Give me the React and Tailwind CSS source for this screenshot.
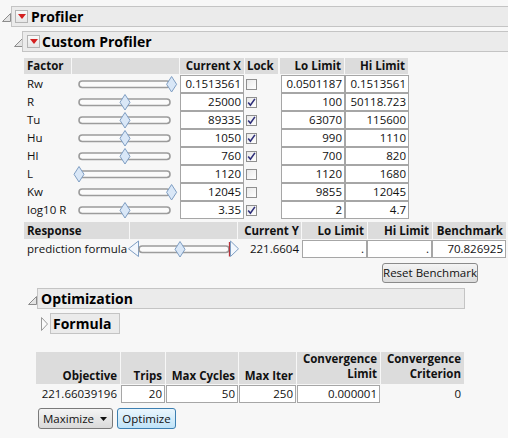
import React from "react";

function OpenTri() {
  return (
    <svg width="9" height="9" viewBox="0 0 9 9" className="block">
      <polygon points="8.5,0.5 8.5,8.5 0.5,8.5" fill="#e4e4e4" stroke="#8c8c8c" strokeWidth="1" />
    </svg>
  );
}

function ClosedTri() {
  return (
    <svg width="7" height="14" viewBox="0 0 7 14" className="block">
      <polygon points="0.5,0.5 6.5,7 0.5,13.5" fill="#fbfbfb" stroke="#9a9a9a" strokeWidth="1" />
    </svg>
  );
}

function RedBtn() {
  return (
    <div className="w-[13px] h-[13px] border border-[#b4b4b4] bg-gradient-to-b from-[#fafafa] to-[#e6e6e6] flex items-center justify-center shrink-0">
      <svg width="8" height="5" viewBox="0 0 8 5" className="block">
        <polygon points="0,0 8,0 4,5" fill="#d42020" />
      </svg>
    </div>
  );
}

function FactorSlider({ c }) {
  return (
    <svg width="107" height="18" viewBox="0 0 107 18" className="block overflow-visible">
      <rect x="7" y="6" width="91" height="6.5" rx="3.2" fill="#fbfbfb" stroke="#9c9c9c" strokeWidth="1.6" />
      <polygon
        points={`${c},1.5 ${c + 5},9.3 ${c},17 ${c - 5},9.3`}
        fill="#d9e7f7"
        stroke="#7f9ec3"
        strokeWidth="1"
      />
    </svg>
  );
}

function ResponseSlider() {
  return (
    <svg width="112" height="18" viewBox="-2 0 112 18" className="block overflow-visible">
      <polygon points="8.5,1 -1.5,8.8 8.5,16.5" fill="#f2f7fd" stroke="#7f9ec3" strokeWidth="1" />
      <rect x="9" y="6" width="90" height="6.5" rx="3.2" fill="#fbfbfb" stroke="#9c9c9c" strokeWidth="1.6" />
      <polygon points="50,1.5 55,9.3 50,17 45,9.3" fill="#d9e7f7" stroke="#7f9ec3" strokeWidth="1" />
      <line x1="99.5" y1="2" x2="99.5" y2="16.5" stroke="#b8323a" strokeWidth="1.3" />
      <polygon points="100.5,1 108.5,8.8 100.5,16.5" fill="#f2f7fd" stroke="#7f9ec3" strokeWidth="1" />
    </svg>
  );
}

function Check({ on }) {
  return (
    <div className="w-[11px] h-[11px] border border-[#8f8f8f] bg-gradient-to-br from-[#e9e9e9] to-[#ffffff] flex items-center justify-center">
      {on && (
        <svg width="9" height="9" viewBox="0 0 9 9" className="block">
          <path d="M1.2,4.6 L3.4,7.3 L7.9,0.9" fill="none" stroke="#2e2f7a" strokeWidth="1.6" />
        </svg>
      )}
    </div>
  );
}

const factors = [
  { n: "Rw", c: 99.6, x: "0.1513561", lock: false, lo: "0.0501187", hi: "0.1513561" },
  { n: "R", c: 53, x: "25000", lock: true, lo: "100", hi: "50118.723" },
  { n: "Tu", c: 53, x: "89335", lock: true, lo: "63070", hi: "115600" },
  { n: "Hu", c: 53, x: "1050", lock: true, lo: "990", hi: "1110" },
  { n: "Hl", c: 53, x: "760", lock: true, lo: "700", hi: "820" },
  { n: "L", c: 7, x: "1120", lock: false, lo: "1120", hi: "1680" },
  { n: "Kw", c: 99.6, x: "12045", lock: false, lo: "9855", hi: "12045" },
  { n: "log10 R", c: 53, x: "3.35", lock: true, lo: "2", hi: "4.7" },
];

const hd = "bg-[#dcdcdc] font-bold flex items-center";
const box = "h-[18px] border border-[#a6a6a6] bg-white flex items-center justify-end pr-[2px]";

export default function App() {
  return (
    <div className="w-[508px] h-[438px] bg-[#f7f7f7] overflow-hidden font-['Open_Sans',sans-serif] text-[11.5px] leading-none text-[#111]">
      {/* Profiler */}
      <div className="pt-[6px] flex items-center">
        <div className="w-[11px] pl-[2px] pt-[2px]">
          <OpenTri />
        </div>
        <div className="flex-1 h-[21px] bg-[#ebebeb] border border-r-0 border-[#c4c4c4] flex items-center pl-[3px] gap-[3px]">
          <RedBtn />
          <span className="font-bold text-[14px] text-black">Profiler</span>
        </div>
      </div>

      {/* Custom Profiler */}
      <div className="mt-[4px] ml-[11px] flex items-center">
        <div className="w-[11px] pl-[3px] pt-[2px]">
          <OpenTri />
        </div>
        <div className="flex-1 h-[21px] bg-[#ebebeb] border border-r-0 border-[#c4c4c4] flex items-center pl-[4px] gap-[2px]">
          <RedBtn />
          <span className="font-bold text-[14px] text-black">Custom Profiler</span>
        </div>
      </div>

      {/* Factor table */}
      <div className="ml-[24px] mt-[6px]">
        <div className="flex h-[16px] gap-px">
          <div className={`${hd} w-[47px] pl-[3px]`}>Factor</div>
          <div className={`${hd} w-[107px]`}></div>
          <div className={`${hd} w-[64px] justify-end pr-[3px]`}>Current X</div>
          <div className={`${hd} w-[33px] pl-[2px]`}>Lock</div>
          <div className={`${hd} w-[64px] justify-end pr-[3px] ml-[1px]`}>Lo Limit</div>
          <div className={`${hd} w-[63px] justify-end pr-[3px]`}>Hi Limit</div>
        </div>
        <div className="mt-px">
          {factors.map((f) => (
            <div key={f.n} className="flex h-[18px]">
              <div className="w-[48px] pl-[3px] flex items-center">{f.n}</div>
              <div className="w-[108px]">
                <FactorSlider c={f.c} />
              </div>
              <div className={`${box} w-[64px]`}>{f.x}</div>
              <div className="w-[37px] pl-[2px] flex items-center">
                <Check on={f.lock} />
              </div>
              <div className={`${box} w-[64px]`}>{f.lo}</div>
              <div className={`${box} w-[64px]`}>{f.hi}</div>
            </div>
          ))}
        </div>

        {/* Response table */}
        <div className="flex h-[17px] gap-px mt-[3px]">
          <div className={`${hd} w-[105px] pl-[3px]`}>Response</div>
          <div className={`${hd} w-[107px]`}></div>
          <div className={`${hd} w-[63px] justify-end pr-[2px]`}>Current Y</div>
          <div className={`${hd} w-[65px] justify-end pr-[3px]`}>Lo Limit</div>
          <div className={`${hd} w-[64px] justify-end pr-[3px]`}>Hi Limit</div>
          <div className={`${hd} w-[73px] justify-end pr-[3px]`}>Benchmark</div>
        </div>
        <div className="flex h-[18px] mt-px">
          <div className="w-[104px] pl-[3px] flex items-center whitespace-nowrap">prediction formula</div>
          <div className="w-[110px]">
            <ResponseSlider />
          </div>
          <div className="w-[64px] flex items-center justify-end pr-[3px]">221.6604</div>
          <div className={`${box} w-[65px]`}>.</div>
          <div className={`${box} w-[65px]`}>.</div>
          <div className={`${box} w-[74px]`}>70.826925</div>
        </div>
        <div className="mt-[5px] ml-[358px] w-[96px] h-[20px] rounded-[3px] border border-[#8a8a8a] bg-gradient-to-b from-[#f4f4f4] to-[#dcdcdc] flex items-center justify-center whitespace-nowrap">
          Reset Benchmark
        </div>
      </div>

      {/* Optimization */}
      <div className="mt-[5px] ml-[25px] flex items-center">
        <div className="w-[12px] pl-[3px] pt-[3px]">
          <OpenTri />
        </div>
        <div className="w-[428px] h-[21px] bg-[#ebebeb] border border-[#c4c4c4] flex items-center pl-[3px]">
          <span className="font-bold text-[14px] text-black">Optimization</span>
        </div>
      </div>
      <div className="mt-[4px] ml-[41px] flex items-center gap-[2px]">
        <ClosedTri />
        <div className="w-[70px] h-[21px] bg-[#ebebeb] border border-[#c4c4c4] flex items-center pl-[2px]">
          <span className="font-bold text-[14px] text-black">Formula</span>
        </div>
      </div>

      {/* Optimization table */}
      <div className="ml-[36px] mt-[18px]">
        <div className="flex h-[32px] gap-px">
          <div className={`${hd} w-[84px] items-end justify-end pr-[3px] pb-[3px]`}>Objective</div>
          <div className={`${hd} w-[44px] items-end justify-end pr-[3px] pb-[3px]`}>Trips</div>
          <div className={`${hd} w-[72px] items-end justify-end pr-[3px] pb-[3px]`}>Max Cycles</div>
          <div className={`${hd} w-[57px] items-end justify-end pr-[3px] pb-[3px]`}>Max Iter</div>
          <div className={`${hd} w-[83px] items-end justify-end pr-[3px] pb-[3px] text-right leading-[15px]`}>
            Convergence
            <br />
            Limit
          </div>
          <div className={`${hd} w-[83px] items-end justify-end pr-[3px] pb-[3px] text-right leading-[15px]`}>
            Convergence
            <br />
            Criterion
          </div>
        </div>
        <div className="flex h-[18px] gap-px mt-px">
          <div className="w-[84px] flex items-center justify-end pr-[3px]">221.66039196</div>
          <div className={`${box} w-[44px]`}>20</div>
          <div className={`${box} w-[72px]`}>50</div>
          <div className={`${box} w-[57px]`}>250</div>
          <div className={`${box} w-[83px]`}>0.000001</div>
          <div className="w-[83px] flex items-center justify-end pr-[3px]">0</div>
        </div>
        <div className="mt-[5px] ml-[2px] flex gap-[4px]">
          <div className="w-[75px] h-[21px] rounded-[3px] border border-[#7a7a7a] bg-gradient-to-b from-[#f4f4f4] to-[#dadada] flex items-center pl-[4px] gap-[6px]">
            <span>Maximize</span>
            <svg width="7" height="4" viewBox="0 0 7 4" className="block">
              <polygon points="0,0 7,0 3.5,4" fill="#111" />
            </svg>
          </div>
          <div className="w-[59px] h-[21px] rounded-[3px] border border-[#3c7fb1] bg-gradient-to-b from-[#eaf6fd] to-[#bfe3f8] flex items-center justify-center">
            Optimize
          </div>
        </div>
      </div>
    </div>
  );
}
